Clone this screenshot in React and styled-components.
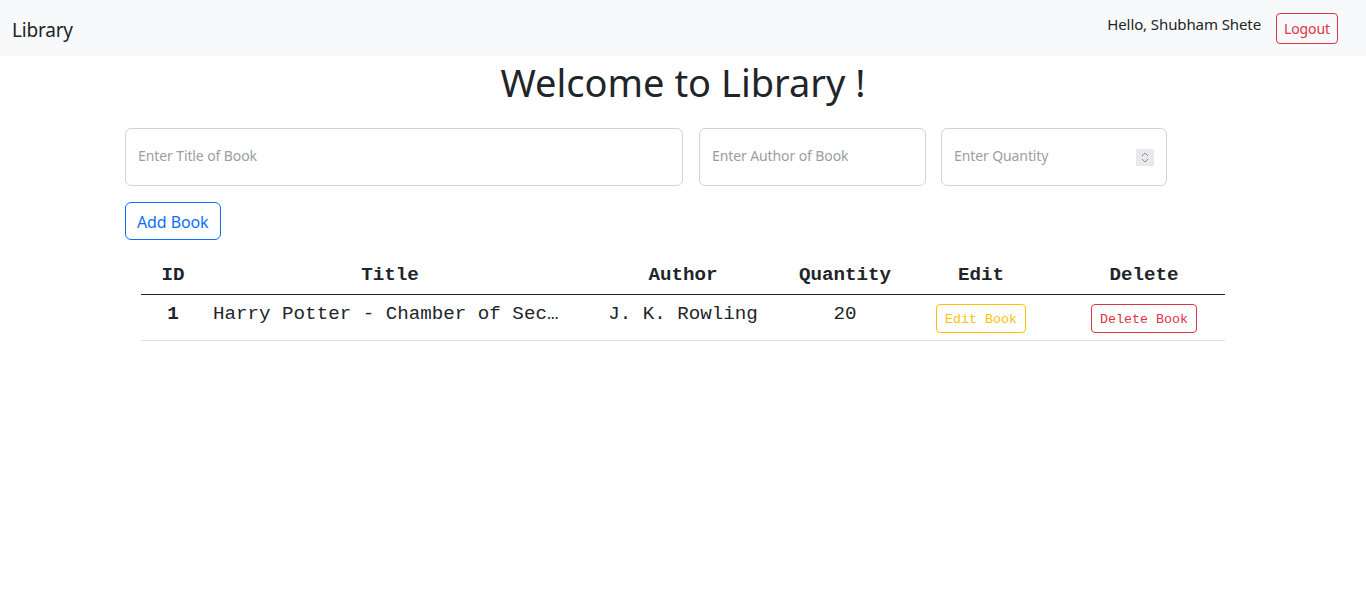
import React from "react";
import styled, { createGlobalStyle } from "styled-components";

const GlobalStyle = createGlobalStyle`
  * { box-sizing: border-box; }
  body {
    margin: 0;
    background: #fff;
    color: #212529;
    font-family: "Noto Sans", "Liberation Sans", sans-serif;
    font-size: 16px;
  }
`;

const Navbar = styled.nav`
  height: 56px;
  background-color: #f8f9fa;
  display: flex;
  align-items: center;
  justify-content: space-between;
  padding: 0 28px 0 12px;
`;

const Brand = styled.a`
  font-size: 19px;
  letter-spacing: -0.2px;
  color: #212529;
  text-decoration: none;
  margin-top: 4px;
`;

const NavRight = styled.div`
  display: flex;
  align-items: center;
  gap: 15px;
`;

const Greeting = styled.span`
  font-size: 15px;
  letter-spacing: -0.1px;
  margin-top: -8px;
`;

const OutlineButton = styled.button`
  font-family: inherit;
  background: transparent;
  border: 1px solid ${(p) => p.$color};
  color: ${(p) => p.$color};
  border-radius: ${(p) => (p.$small ? "4px" : "6px")};
  font-size: ${(p) => (p.$small ? "14px" : "16px")};
  height: ${(p) => (p.$small ? "31px" : "38px")};
  padding: ${(p) => (p.$small ? "0 7px" : "1px 11px 0")};
  letter-spacing: -0.1px;
  cursor: pointer;
`;

const Main = styled.main`
  width: 1116px;
  margin: 0 auto;
`;

const Heading = styled.h1`
  margin: 2px 0 22px;
  text-align: center;
  font-weight: 400;
  font-size: 38px;
  line-height: 48px;
`;

const InputRow = styled.div`
  display: flex;
  gap: 16px;
  margin-bottom: 16px;
`;

const InputBox = styled.label`
  width: ${(p) => p.$w}px;
  margin-left: ${(p) => p.$shift || 0}px;
  height: 58px;
  border: 1px solid #ced4da;
  border-radius: 6px;
  display: flex;
  align-items: center;
  padding: 0 12px 3px;
`;

const Field = styled.input`
  flex: 1;
  min-width: 0;
  border: none;
  outline: none;
  background: transparent;
  font-family: inherit;
  font-size: 14px;
  letter-spacing: -0.1px;
  color: #212529;
  padding: 0;
  &::placeholder { color: #9a9ea4; }
`;

const Spinner = styled.span`
  width: 18px;
  height: 17px;
  margin-top: 3px;
  background: #e9e9ed;
  display: flex;
  align-items: center;
  justify-content: center;
`;

const Table = styled.table`
  margin: 18px 16px 0;
  width: 1084px;
  border-collapse: collapse;
  table-layout: fixed;
  font-family: "Liberation Mono", "Courier New", monospace;
  font-size: 19.2px;
  line-height: 20px;
  color: #212529;
`;

const Th = styled.th`
  padding: 7px 8px 9px;
  text-align: center;
  font-weight: 700;
  border-bottom: 1px solid #212529;
`;

const Td = styled.td`
  padding: 9px 8px 7px;
  vertical-align: top;
  text-align: center;
  font-weight: ${(p) => (p.$bold ? 700 : 400)};
  border-bottom: 1px solid #dee2e6;
  white-space: nowrap;
  overflow: hidden;
  text-overflow: ellipsis;
`;

const RowButton = styled.button`
  font-family: "Liberation Mono", "Courier New", monospace;
  font-size: 13.33px;
  background: transparent;
  border: 1px solid ${(p) => p.$color};
  color: ${(p) => p.$color};
  border-radius: 4px;
  height: 29px;
  padding: 1px 8px 0;
  cursor: pointer;
`;

const books = [
  { id: 1, title: "Harry Potter - Chamber of Secrets", author: "J. K. Rowling", qty: 20 },
];

export default function App() {
  return (
    <>
      <GlobalStyle />
      <Navbar>
        <Brand href="#">Library</Brand>
        <NavRight>
          <Greeting>Hello, Shubham Shete</Greeting>
          <OutlineButton $small $color="#dc3545">Logout</OutlineButton>
        </NavRight>
      </Navbar>
      <Main>
        <Heading>Welcome to Library !</Heading>
        <InputRow>
          <InputBox $w={558}>
            <Field placeholder="Enter Title of Book" />
          </InputBox>
          <InputBox $w={227}>
            <Field placeholder="Enter Author of Book" />
          </InputBox>
          <InputBox $w={226} $shift={-1}>
            <Field placeholder="Enter Quantity" />
            <Spinner>
              <svg width="8" height="11" viewBox="0 0 8 11" fill="none" stroke="#8a8a8f" strokeWidth="1">
                <path d="M1 4 L4 1 L7 4" />
                <path d="M1 7 L4 10 L7 7" />
              </svg>
            </Spinner>
          </InputBox>
        </InputRow>
        <OutlineButton $color="#0d6efd">Add Book</OutlineButton>
        <Table>
          <colgroup>
            <col style={{ width: 64 }} />
            <col style={{ width: 370 }} />
            <col style={{ width: 216 }} />
            <col style={{ width: 108 }} />
            <col style={{ width: 164 }} />
            <col style={{ width: 162 }} />
          </colgroup>
          <thead>
            <tr>
              <Th>ID</Th>
              <Th>Title</Th>
              <Th>Author</Th>
              <Th>Quantity</Th>
              <Th>Edit</Th>
              <Th>Delete</Th>
            </tr>
          </thead>
          <tbody>
            {books.map((b) => (
              <tr key={b.id}>
                <Td $bold>{b.id}</Td>
                <Td>{b.title}</Td>
                <Td>{b.author}</Td>
                <Td>{b.qty}</Td>
                <Td>
                  <RowButton $color="#ffc107">Edit Book</RowButton>
                </Td>
                <Td>
                  <RowButton $color="#dc3545">Delete Book</RowButton>
                </Td>
              </tr>
            ))}
          </tbody>
        </Table>
      </Main>
    </>
  );
}
